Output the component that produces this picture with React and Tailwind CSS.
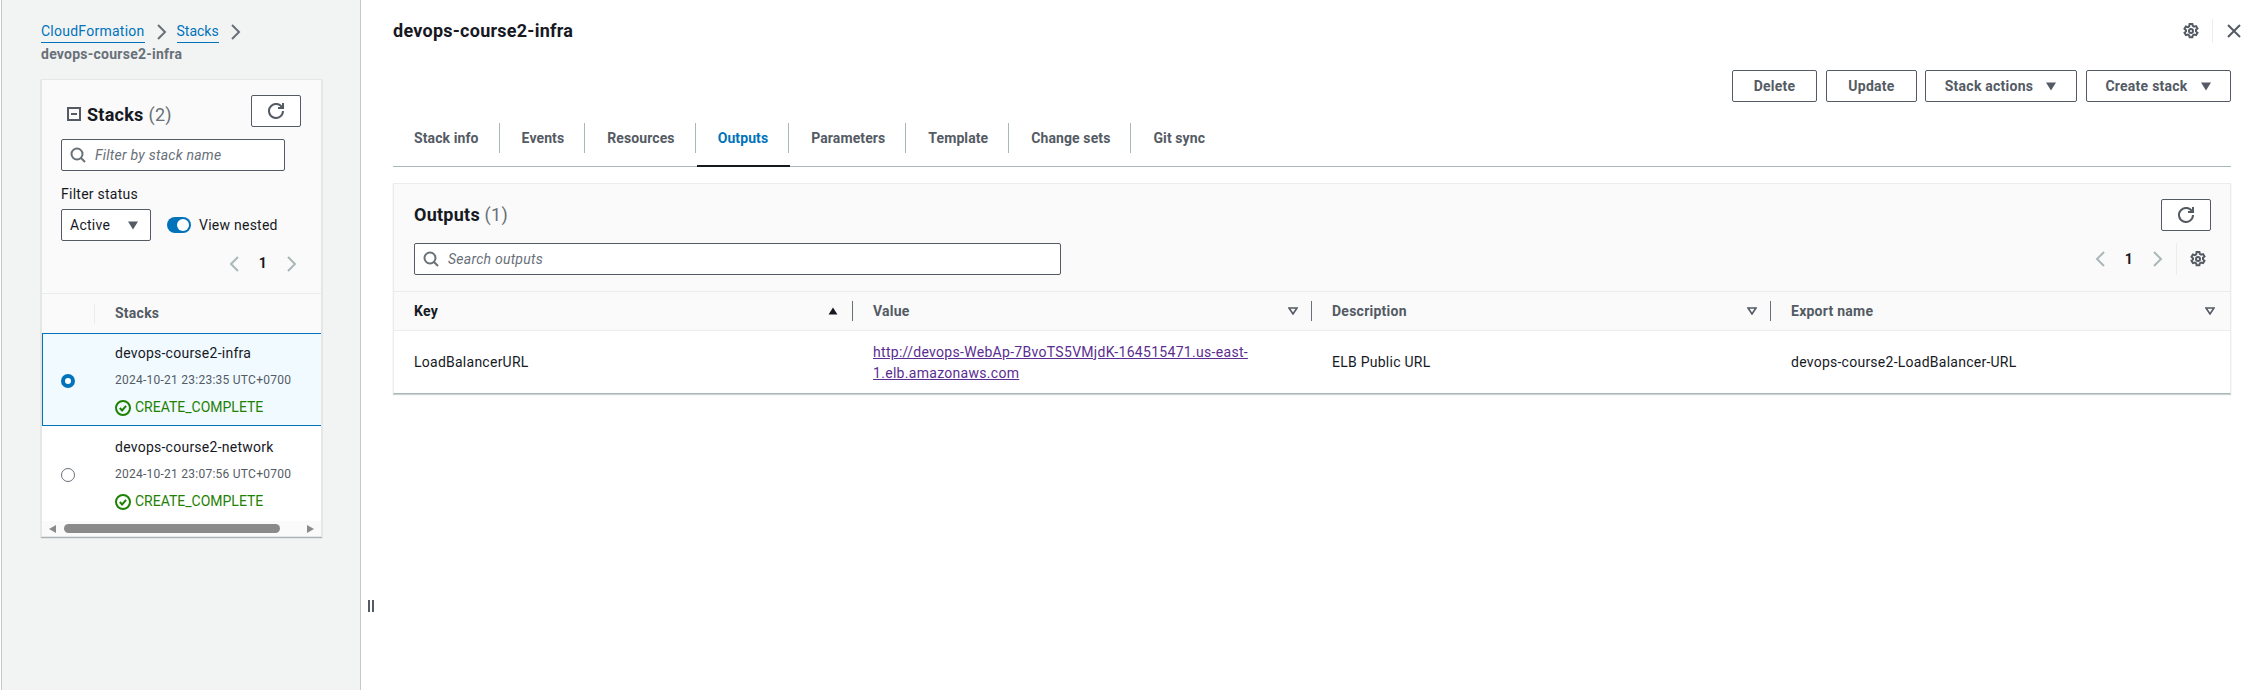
import React from 'react';

const font = { fontFamily: 'Roboto, sans-serif' };

const Stroke = ({ size = 16, className = '', sw = 2, children }) => (
  <svg width={size} height={size} viewBox="0 0 16 16" fill="none" stroke="currentColor" strokeWidth={sw} className={className}>
    {children}
  </svg>
);

const Refresh = () => (
  <Stroke className="text-[#545b64]">
    <path d="M10 5h5V0" />
    <path d="M15 8a7 7 0 1 1-.67-3" />
  </Stroke>
);

const Search = ({ className }) => (
  <Stroke className={className}>
    <circle cx="7" cy="7" r="5.5" />
    <path d="m11 11 4 4" />
  </Stroke>
);

const Gear = () => (
  <Stroke className="text-[#545b64]" sw={2}>
    <path d="M6.6 1h2.8l.4 1.9 1.4.8 1.9-.6 1.4 2.4-1.5 1.3v1.6l1.5 1.3-1.4 2.4-1.9-.6-1.4.8-.4 1.9H6.6l-.4-1.9-1.4-.8-1.9.6-1.4-2.4 1.5-1.3V7.2L1.5 5.9l1.4-2.4 1.9.6 1.4-.8z" />
    <circle cx="8" cy="8" r="2" />
  </Stroke>
);

const Chevron = ({ dir = 'right', className }) => (
  <Stroke className={className}>
    <path d={dir === 'right' ? 'm5 1 7 7-7 7' : 'm11 1-7 7 7 7'} />
  </Stroke>
);

const Caret = ({ className = 'text-[#545b64]' }) => (
  <svg width="12" height="9" viewBox="0 0 12 9" className={className}>
    <path d="M1 0.5h10L6 8.5z" fill="currentColor" />
  </svg>
);

const SortDown = () => (
  <svg width="10" height="8" viewBox="0 0 10 8" className="text-[#545b64]">
    <path d="M1 1h8L5 7z" fill="none" stroke="currentColor" strokeWidth="1.6" />
  </svg>
);

const Button = ({ children, className = '' }) => (
  <button className={`h-8 flex items-center justify-center border border-[#545b64] rounded-[2px] bg-white text-[14px] font-bold text-[#545b64] ${className}`}>
    {children}
  </button>
);

const Pager = ({ className = '' }) => (
  <div className={`flex items-center ${className}`}>
    <Chevron dir="left" className="text-[#aab7b8]" />
    <span className="w-[12px] mx-[14px] text-center text-[14px] font-bold text-[#16191f]">1</span>
    <Chevron className="text-[#aab7b8]" />
  </div>
);

const StackRow = ({ name, date, selected }) => (
  <div className={`flex items-center pt-[2px] ${selected ? 'h-[93px] border-y border-[#0073bb] bg-[#f1faff] shadow-[inset_1px_0_0_#0073bb]' : 'h-[95px] bg-white'}`}>
    <div className="w-[53px] pl-[19px] flex-none">
      {selected ? (
        <div className="w-[14px] h-[14px] rounded-full border-[4px] border-[#0073bb] bg-white" />
      ) : (
        <div className="w-[14px] h-[14px] rounded-full border border-[#687078] bg-white" />
      )}
    </div>
    <div className="pl-[20px] flex flex-col gap-[6px] whitespace-nowrap">
      <div className="h-[21px] leading-[21px] text-[14px] text-[#16191f]">{name}</div>
      <div className="h-[21px] leading-[21px] text-[12px] text-[#545b64]">{date}</div>
      <div className="h-[21px] flex items-center gap-[4px] text-[14px] tracking-normal text-[#1d8102]">
        <Stroke>
          <circle cx="8" cy="8" r="7" />
          <path d="m4.8 8 2.3 2.4 4-4.6" />
        </Stroke>
        CREATE_COMPLETE
      </div>
    </div>
  </div>
);

const StacksPanel = () => (
  <aside className="flex-none ml-px w-[360px] h-full bg-[#f2f3f3] border-x border-[#c6c9cc] pl-[39px] pr-[38px]">
    <div className="pt-[21px] h-[79px]">
      <div className="flex items-center h-[21px] text-[14px] leading-[21px]">
        <a className="text-[#0073bb] border-b border-[#0073bb]">CloudFormation</a>
        <Chevron className="ml-[8px] mr-[8px] text-[#687078]" />
        <a className="text-[#0073bb] tracking-normal border-b border-[#0073bb]">Stacks</a>
        <Chevron className="mx-[8px] text-[#687078]" />
      </div>
      <div className="mt-[2px] text-[14px] leading-[21px] font-bold text-[#687078]">devops-course2-infra</div>
    </div>

    <section className="w-[281px] h-[458px] border border-[#e4e6e7] bg-[#fafafa] shadow-[0_1px_1px_rgba(0,28,36,0.3)] overflow-hidden">
      <div className="h-[214px] border-b border-[#eaeded] pl-[19px] pr-[20px] pt-[15px]">
        <div className="flex justify-between">
          <h2 className="flex items-center h-8 pl-[6px] pt-[6px] text-[18px] font-bold text-[#16191f]">
            <svg width="14" height="14" viewBox="0 0 14 14" className="mr-[6px] text-[#545b64]" fill="none" stroke="currentColor" strokeWidth="2">
              <rect x="1" y="1" width="12" height="12" />
              <path d="M4 7h6" />
            </svg>
            Stacks <span className="ml-[5px] font-normal text-[#687078]">(2)</span>
          </h2>
          <Button className="w-[50px]"><Refresh /></Button>
        </div>
        <div className="mt-[12px] w-[224px] h-8 flex items-center border border-[#545b64] rounded-[2px] bg-white pl-[8px] gap-[9px]">
          <Search className="text-[#687078]" />
          <span className="text-[14px] italic text-[#687078]">Filter by stack name</span>
        </div>
        <div className="mt-[13px] text-[14px] leading-[21px] text-[#16191f]">Filter status</div>
        <div className="mt-[4px] flex items-center">
          <div className="w-[90px] h-8 flex items-center justify-between border border-[#545b64] rounded-[2px] bg-white pl-[8px] pr-[11px] text-[14px] text-[#16191f]">
            Active
            <Caret />
          </div>
          <div className="ml-[16px] relative w-[24px] h-[16px] rounded-full bg-[#0073bb]">
            <div className="absolute right-[2px] top-[2px] w-[12px] h-[12px] rounded-full bg-white" />
          </div>
          <span className="ml-[8px] text-[14px] text-[#16191f]">View nested</span>
        </div>
        <Pager className="mt-[12px] justify-end pr-[2px]" />
      </div>
      <div className="h-[39px] flex items-center text-[14px] font-bold text-[#545b64]">
        <div className="w-[53px] h-[20px] border-r border-[#eaeded]" />
        <div className="pl-[20px]">Stacks</div>
      </div>
      <StackRow name="devops-course2-infra" date="2024-10-21 23:23:35 UTC+0700" selected />
      <StackRow name="devops-course2-network" date="2024-10-21 23:07:56 UTC+0700" />
      <div className="h-[15px] flex items-center justify-between px-[7px]">
        <svg width="8" height="8" viewBox="0 0 8 8" className="text-[#8a8a8a]"><path d="M7 0v8L0 4z" fill="currentColor" /></svg>
        <div className="w-[216px] h-[9px] -ml-[4px] mr-[16px] rounded-full bg-[#8a8a8a]" />
        <svg width="8" height="8" viewBox="0 0 8 8" className="text-[#8a8a8a]"><path d="M1 0v8l7-4z" fill="currentColor" /></svg>
      </div>
    </section>
  </aside>
);

const tabs = ['Stack info', 'Events', 'Resources', 'Outputs', 'Parameters', 'Template', 'Change sets', 'Git sync'];

const Tabs = () => (
  <nav className="mt-[21px] h-[44px] border-b border-[#aab7b8] flex items-start tracking-[0.1px]">
    {tabs.map((t, i) => (
      <div
        key={t}
        className={`relative h-[43px] flex items-start px-[1px] ${t === 'Outputs' ? 'after:absolute after:inset-x-0 after:-bottom-px after:h-[2px] after:bg-[#16191f]' : ''}`}
      >
        <div className={`h-[30px] flex items-center px-[20px] text-[14px] font-bold ${i < tabs.length - 1 ? 'border-r border-[#aab7b8]' : ''} ${t === 'Outputs' ? 'text-[#0073bb]' : 'text-[#545b64]'}`}>
          {t}
        </div>
      </div>
    ))}
  </nav>
);

const HeadCell = ({ label, sorted, last }) => (
  <div className={`flex items-center justify-between pl-[20px] ${last ? 'pr-[15px]' : 'pr-[14px]'} relative`}>
    <span className={`text-[14px] font-bold ${sorted ? 'text-[#16191f]' : 'text-[#545b64]'}`}>{label}</span>
    {sorted ? <Caret className="text-[#16191f] rotate-180 w-[12px] h-[8px]" /> : <SortDown />}
    {!last && <div className="absolute right-0 top-[9px] h-[20px] border-r border-[#687078]" />}
  </div>
);

const OutputsTable = () => (
  <section className="mt-[16px] h-[211px] border border-[#eaeded] border-b-[#aab7b8] shadow-[0_1px_1px_rgba(0,28,36,0.2)] bg-white">
    <div className="h-[108px] bg-[#fafafa] border-b border-[#eaeded] pl-[20px] pr-[19px] pt-[15px]">
      <div className="flex justify-between h-8 items-center">
        <h2 className="pb-[2px] text-[18px] font-bold text-[#16191f]">
          Outputs <span className="font-normal text-[#687078]">(1)</span>
        </h2>
        <Button className="w-[50px]"><Refresh /></Button>
      </div>
      <div className="mt-[12px] flex justify-between items-center">
        <div className="w-[647px] h-8 flex items-center border border-[#545b64] rounded-[2px] bg-white pl-[8px] gap-[9px]">
          <Search className="text-[#687078]" />
          <span className="text-[14px] italic text-[#687078]">Search outputs</span>
        </div>
        <div className="flex items-center mr-[5px]">
          <Pager />
          <div className="ml-[11px] h-8 border-l border-[#eaeded] pl-[13px] flex items-center"><Gear /></div>
        </div>
      </div>
    </div>
    <div className="grid grid-cols-4 h-[39px] bg-[#fafafa] border-b border-[#eaeded]">
      <HeadCell label="Key" sorted />
      <HeadCell label="Value" />
      <HeadCell label="Description" />
      <HeadCell label="Export name" last />
    </div>
    <div className="grid grid-cols-4 h-[62px] pt-[1px] items-center text-[14px] text-[#16191f]">
      <div className="pl-[20px]">LoadBalancerURL</div>
      <a className="pl-[20px] pr-[36px] leading-[21px] tracking-[0.3px] text-[#5a2d91] underline">
        http://devops-WebAp-7BvoTS5VMjdK-164515471.us-east-1.elb.amazonaws.com
      </a>
      <div className="pl-[20px]">ELB Public URL</div>
      <div className="pl-[20px]">devops-course2-LoadBalancer-URL</div>
    </div>
  </section>
);

const App = () => (
  <div className="relative h-[690px] w-[2261px] flex bg-white overflow-hidden tracking-[0.25px]" style={font}>
    <StacksPanel />
    <div className="absolute left-[368px] top-[600px] flex gap-[2px]">
      <div className="w-[2px] h-[12px] bg-[#545b64]" />
      <div className="w-[2px] h-[12px] bg-[#545b64]" />
    </div>
    <main className="flex-none ml-[32px] w-[1838px]">
      <div className="h-[70px] pt-[19px] flex items-start justify-between">
        <h1 className="text-[18px] leading-[24px] font-bold text-[#16191f]">devops-course2-infra</h1>
        <div className="flex items-center -mr-[11px]">
          <Gear />
          <div className="mx-[13px] h-[24px] border-l border-[#eaeded]" />
          <Stroke className="text-[#545b64]"><path d="m2 2 12 12M14 2 2 14" /></Stroke>
        </div>
      </div>
      <div className="flex justify-end">
        <Button className="w-[85px]">Delete</Button>
        <Button className="ml-[9px] w-[91px]">Update</Button>
        <Button className="ml-[8px] w-[152px] gap-[12px]">Stack actions <Caret /></Button>
        <Button className="ml-[9px] w-[145px] gap-[12px]">Create stack <Caret /></Button>
      </div>
      <Tabs />
      <OutputsTable />
    </main>
  </div>
);

export default App;
